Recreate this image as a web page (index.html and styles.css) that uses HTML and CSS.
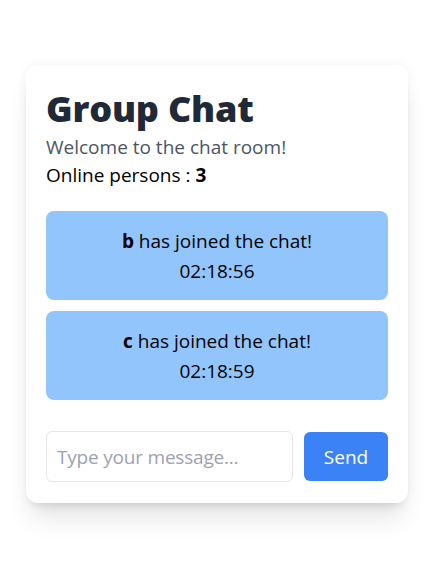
FILE: index.html
```html
<!DOCTYPE html>
<html lang="en">
<head>
<meta charset="utf-8">
<title>Group Chat</title>
<link rel="stylesheet" href="styles.css">
</head>
<body>
<main class="page">
  <section class="card">
    <h1 class="title">Group Chat</h1>
    <p class="subtitle">Welcome to the chat room!</p>
    <p class="online">Online persons : <strong>3</strong></p>
    <div class="messages">
      <div class="message">
        <div><strong>b</strong> has joined the chat!</div>
        <div>02:18:56</div>
      </div>
      <div class="message">
        <div><strong>c</strong> has joined the chat!</div>
        <div>02:18:59</div>
      </div>
    </div>
    <form class="composer">
      <input class="input" type="text" placeholder="Type your message...">
      <button class="send" type="button">Send</button>
    </form>
  </section>
</main>
</body>
</html>
```
FILE: styles.css
```css
* { box-sizing: border-box; }
html, body { margin: 0; padding: 0; background: #ffffff; }
body {
  font-family: "Open Sans", "Noto Sans", "DejaVu Sans", sans-serif;
  color: #000;
}
.page {
  min-height: 100vh;
  padding-bottom: 4px;
  display: flex;
  align-items: center;
  justify-content: center;
}
.card {
  width: 382px;
  margin-left: -1px;
  background: #fff;
  border-radius: 12px;
  padding: 24px 20px 21px;
  box-shadow: 0 0 12px rgba(0,0,0,0.05), 0 20px 25px -5px rgba(0,0,0,0.1), 0 8px 10px -6px rgba(0,0,0,0.1);
}
.title {
  margin: 0 0 4px;
  font-size: 36px;
  line-height: 40px;
  font-weight: 800;
  color: #1f2937;
  letter-spacing: -0.2px;
}
.subtitle {
  margin: 0;
  font-size: 19px;
  line-height: 28px;
  color: #4b5563;
}
.online {
  margin: 0 0 22px;
  font-size: 19px;
  line-height: 28px;
}
.online strong { font-weight: 700; }
.messages {
  display: flex;
  flex-direction: column;
  gap: 11px;
  margin-bottom: 31px;
}
.message {
  background: #93c5fd;
  border-radius: 8px;
  padding: 15px 16px 14px;
  text-align: center;
  font-size: 19px;
  line-height: 30px;
  min-height: 89px;
}
.message strong { font-weight: 700; }
.composer {
  display: flex;
  gap: 11px;
  margin: 0;
}
.input {
  flex: 1;
  min-width: 0;
  height: 51px;
  border: 1px solid #e5e7eb;
  border-radius: 6px;
  padding: 0 10px;
  font-family: inherit;
  font-size: 19px;
  color: #111827;
  outline: none;
}
.input::placeholder { color: #9ca3af; letter-spacing: -0.2px; }
.send {
  width: 84px;
  height: 49px;
  margin-top: 1px;
  border: none;
  border-radius: 6px;
  background: #3b82f6;
  color: #fff;
  font-family: inherit;
  font-size: 19px;
  cursor: pointer;
}
```
